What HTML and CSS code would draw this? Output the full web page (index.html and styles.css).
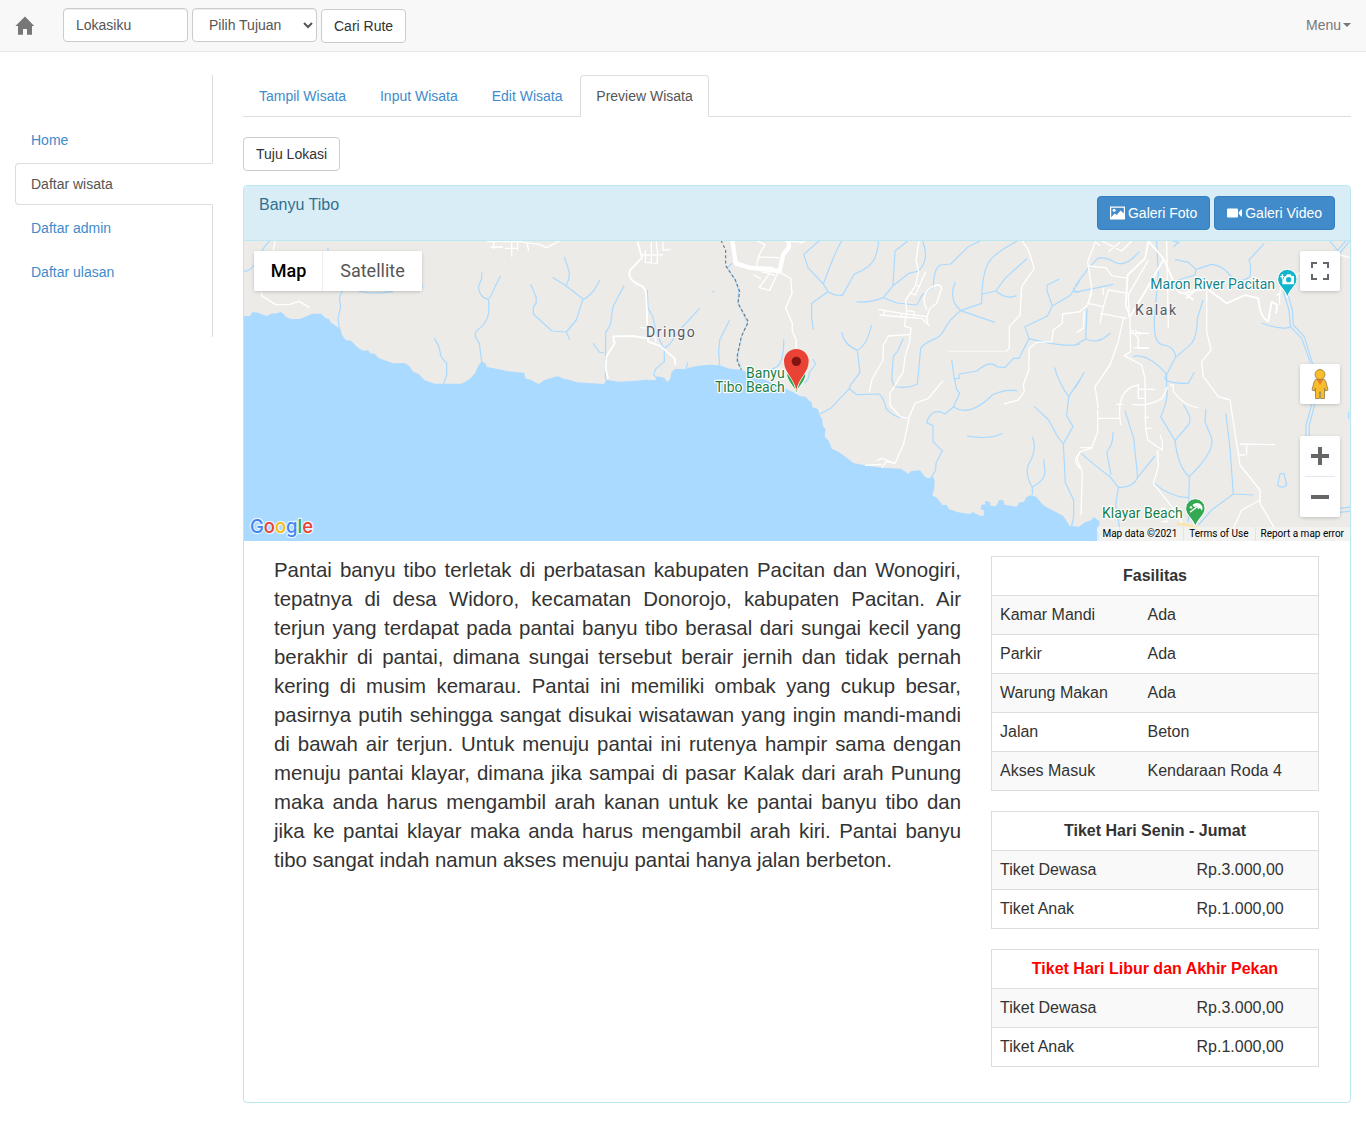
FILE: index.html
```html
<!DOCTYPE html>
<html lang="id">
<head>
<meta charset="utf-8">
<title>Preview Wisata</title>
<link rel="stylesheet" href="styles.css">
</head>
<body>
<header class="navbar">
  <a class="brand" href="#" aria-label="Home"><svg width="20" height="20" viewBox="0 0 20 20"><path fill="#777" d="M10 0.6 0.4 10H3V18.8H8V13H12V18.8H17V10H19.2Z"/></svg></a>
  <form class="route-form">
    <input class="control" type="text" value="Lokasiku">
    <select class="control"><option>Pilih Tujuan</option></select>
    <button class="btn btn-route" type="button">Cari Rute</button>
  </form>
  <a class="menu" href="#">Menu<span class="caret"></span></a>
</header>
<div class="page">
  <nav class="side-tabs">
    <a href="#">Home</a>
    <a class="active" href="#">Daftar wisata</a>
    <a href="#">Daftar admin</a>
    <a href="#">Daftar ulasan</a>
  </nav>
  <main class="content">
    <nav class="tabs">
      <a href="#">Tampil Wisata</a>
      <a href="#">Input Wisata</a>
      <a href="#">Edit Wisata</a>
      <a class="active" href="#">Preview Wisata</a>
    </nav>
    <button class="btn btn-go" type="button">Tuju Lokasi</button>
    <section class="panel">
      <div class="panel-heading">
        <h3>Banyu Tibo</h3>
        <div class="actions">
          <button class="btn btn-primary" type="button"><svg width="15" height="14" viewBox="0 0 15 14"><path fill="#fff" fill-rule="evenodd" d="M0 .5H15V13.5H0ZM1.2 1.7V11.2L4.6 7.4 6.6 9 10.6 4.6 13.8 7.6V1.7Z"/><circle cx="4.1" cy="4.3" r="1.5" fill="#fff"/></svg><span>Galeri Foto</span></button>
          <button class="btn btn-primary" type="button"><svg width="15" height="14" viewBox="0 0 15 14"><path fill="#fff" d="M1 2.5H10Q11 2.5 11 3.5V10.5Q11 11.5 10 11.5H1Q0 11.5 0 10.5V3.5Q0 2.5 1 2.5ZM11.6 6.6 14 3.4H15V10.6H14L11.6 7.6Z"/></svg><span>Galeri Video</span></button>
        </div>
      </div>
      <div class="map">
        <svg class="map-canvas" width="1106" height="300" viewBox="0 0 3318 900">
          <rect width="3318" height="900" fill="#ecebe7"/>
          <!-- sea -->
          <g fill="#aadaff">
            <path transform="translate(-3 -18)" d="M0 243 20 244 28 231 45 233 70 243 85 236 105 234 112 230 121 236 128 245 143 252 170 252 187 245 207 236 235 236 246 248 258 252 263 262 292 282 297 299 307 314 324 318 345 338 360 347 375 346 384 357 392 354 408 370 450 385 484 384 496 391 512 411 528 418 545 436 575 446H655L680 432 697 414 702 400 715 379 727 385 732 396 760 401 795 409 845 414V925H0Z"/>
            <path transform="translate(837 -18)" d="M-5 412 0 420 10 431 24 435 47 447 66 434 92 427 105 424 118 430 138 434 160 442 243 447 250 434 285 440 340 437 365 434 397 436 402 424 424 428 432 441 441 433 446 411 456 402 484 402 520 393 560 389 590 391 620 401 655 404 785 460 820 476 834 486 850 488V925H-5Z"/>
            <path transform="translate(1668 -18)" d="M-10 482 17 485 28 498 35 502 37 517 53 521 62 547 67 552 68 571 77 583 74 605 86 617 95 641 115 650 140 668 160 684 195 691 245 698 303 701 326 717 332 709 360 706 376 727 389 730 397 722 404 736 403 759 397 782 409 787 428 811 440 809 446 822 475 832 509 837 518 831 540 842 551 842 552 827 541 821 544 810 556 808 555 797 570 801 571 812 589 813 597 795 610 796 613 809 650 815 658 802 672 801 679 786 691 781 708 785 732 812 790 843 809 873 850 876V925H-10Z"/>
            <path transform="translate(2493 -18)" d="M-20 875 10 877 28 863 48 856 56 846 73 858 74 866 66 885 74 895 70 925H-20Z"/>
          </g>
          <!-- rivers -->
          <g class="river">
            <path transform="translate(-3 -18)" d="M80 18Q62 34 54 55L33 90Q20 110 0 109M255 38V50M290 290 285 250 293 215 289 190 300 160M340 165Q370 180 450 170M525 167Q540 165 537 150M716 112 716 130 706 157Q711 187 734 193 744 187 755 157L773 122M737 194V235Q734 252 722 269L697 292V305L709 325 716 380M574 310 588 335 594 365 611 385V420L602 446"/>
            <path transform="translate(837 -18)" d="M124 66 138 108Q142 130 130 150M88 127 130 153 180 192 160 255 130 291 140 314M230 135Q218 162 203 177T180 192M23 148 39 185 40 203 31 217V237L87 288 130 291M303 152 270 215 262 270 248 292 247 434M210 325 230 352 242 353M373 165 375 220 390 246 399 290 424 345V380L398 402 392 419 402 430M530 220 478 276 438 330 424 340M568 172 573 168M620 255 590 315 587 350 590 390M494 382 490 400M655 404 643 370 655 305 674 263 645 205 647 165 637 135 612 98 628 85M782 313Q783 350 775 375T742 403"/>
            <path transform="translate(1668 -18)" d="M57 18 11 58 24 98 70 147 84 170 35 205V250L40 284M125 18Q105 50 70 147M84 170Q105 183 127 181L163 117Q215 98 226 65T235 18M170 200Q205 205 250 188L279 152 327 115 355 108Q390 75 368 18M323 18 285 48 279 152M250 188 290 204 350 210 367 180 400 155Q400 105 420 90L452 87 505 35 540 18M466 142Q450 175 465 207L482 227 545 205Q545 100 575 70 600 45 652 18M548 177 587 168Q620 195 650 182M587 168 618 127 682 70M482 227 585 262M482 227Q450 250 432 285 424 302 408 310 370 325 362 340L352 447Q320 463 279 453M126 292Q130 328 172 346 202 330 214 270M172 346 180 412 150 452 148 461 92 520 60 537M148 461 170 479 237 477Q253 490 258 520 280 545 303 548M310 310 295 345 280 365 275 432 282 452M38 372 47 387 28 412 25 430 14 445M778 132 742 150 741 167 757 213M840 135 812 180 757 213 742 243 675 275 687 311 657 370H640L615 398 590 395Q573 373 530 408L478 417 477 430 463 431M820 158 825 170 840 170M687 311Q800 340 840 327M455 374 463 431 470 463 479 475 460 516 435 537Q395 515 380 563L399 572V620L427 647 408 685 407 705 395 725M460 516Q510 547 577 480 610 462 652 467M501 603Q570 615 608 595M703 515 746 555 773 605 790 627 796 743 821 795V845L815 873M790 627 819 575 800 542 806 485 840 433M763 397Q780 450 806 485M697 606Q712 640 690 680 670 710 697 757 735 735 735 710L731 673M697 757V780"/>
            <path transform="translate(2493 -18)" d="M0 153 40 100 68 70Q90 65 120 82T193 50M0 172 115 148M36 222 32 312 0 330M32 312Q70 330 106 294M28 411 0 460M245 18 250 120 240 230Q230 325 265 330T302 367L350 325Q367 300 367 250L384 195M174 364Q220 355 275 418 250 445 340 445L358 412M302 367 275 418V450L277 480Q270 520 257 545L300 617 340 570Q355 550 325 510M300 617Q310 700 343 725 420 650 410 610L390 560 393 522M343 725 340 860M235 743Q290 790 343 788M452 535Q460 590 465 640L475 777 410 825 370 870M475 777 535 780M114 592Q115 630 95 650L108 720M18 655Q70 700 105 725L130 757 122 810 135 885M130 757Q175 760 188 727L240 663M188 727 176 610 150 527M294 18 312 22 295 35M300 73 340 82 363 103 360 120 310 135M363 103 410 88Q440 90 465 120T525 125Q530 90 522 75L568 25M561 264Q610 285 645 277M765 18 795 55M780 55 812 18M790 60 824 18M821 530V552M795 820 826 816M795 832 826 828M615 716H627L635 750Q620 763 608 750Z"/>
            <path transform="translate(2493 -18)" d="M625 170 642 225 646 275 680 310 707 385M635 165 652 225 655 270 688 305 717 400M711 505 693 570V610M720 505 703 570V610"/>
          </g>
          <!-- minor roads -->
          <g class="road">
            <path transform="translate(-3 -18)" d="M96 18 90 50M55 170 56 182 98 209 140 208 168 199 200 218M732 20H840M752 20V42M742 36H780M806 20V65M824 18V46M785 40H824"/>
            <path transform="translate(837 -18)" d="M0 22 50 28 70 38 110 18M12 22 17 48M367 45V82L403 85V60H356M385 20V85M420 20V46L442 43M400 20 404 58 420 60M350 277 376 280 398 310V322M376 280V322M703 18 726 28 708 60 700 95 752 98M708 66 768 68M752 100 708 158 740 166 765 112M716 110 756 120M692 120 714 131M785 18 840 22M767 110 803 130 807 175 788 220 808 265V290L820 315V345"/>
            <path transform="translate(1668 -18)" d="M0 25 18 18M357 18 348 75 356 110 345 155 317 195 320 230 313 273 333 280 329 320 315 365 310 410 270 475 270 510 300 545 326 550 345 505 385 490 428 438M345 150 357 155 345 180 327 172M357 155 377 110M235 223 305 235 380 245 383 265M238 240 310 246 365 250 388 272M320 227 343 230 340 245M253 225V242M305 235 302 248M380 225Q360 180 390 160T425 160L410 205 390 220 378 255M333 298 265 303 250 330 249 375 215 435 208 472M327 550 310 630 285 685 245 670 230 677M285 685 260 680 245 697M195 691 245 688M667 18 685 45 703 100 665 155 660 240 628 275V340L620 348M840 230 788 237 787 265 760 285 755 320 710 322 688 340 686 405 670 450 673 470 655 495 612 507M840 655Q815 675 840 700"/>
            <path transform="translate(2493 -18)" d="M62 18 38 80 50 160 40 208 12 232M38 93 92 98 110 122 160 130M80 18 140 48 170 18M100 50 135 22M62 20 75 32M50 175 38 205 85 215 100 165 160 175M85 160V180M85 215 75 265M75 235 155 250M28 228 25 280 5 292M145 250 130 320 105 390 60 455 70 520M220 75 160 180 163 250M165 250 167 350 148 362 200 390 210 430 212 580 218 615 262 645V620L255 600M163 295H222M170 285 190 310V340H222M175 338H220M190 293 220 296M180 285 195 300M275 18 280 280M395 140V290L408 345 380 380 385 425 430 485 465 495 495 690 555 765V805L620 917M495 627 600 629M515 627V660M493 660H510M555 795 500 825 470 890M285 450H295V470Q330 515 370 518M278 455 262 490Q220 515 172 508M190 447V490H212M190 463H240M190 450Q120 460 137 570M123 508H145M68 525V550H135M68 550V590L50 640 15 650 5 670 22 710 18 840M16 638H50M208 547H222M210 580H230M248 645 250 695 235 745 310 840 320 865M258 820H270L275 860M260 860H280M620 150Q610 185 615 210M795 60 826 68M665 120 680 110"/>
            <path transform="translate(1668 -18)" stroke="#f7f5f5" d="M443 349H620"/>
          </g>
          <g class="road-wide">
            <path transform="translate(837 -18)" d="M343 18 357 68 322 105Q310 130 345 148 372 155 370 190L375 320 410 332 455 370 457 390M375 310 330 303 270 304 275 325 250 365 248 400 255 430"/>
            <path transform="translate(2493 -18)" d="M220 18 265 70 285 115 310 170 320 175 395 160 455 205 510 180 550 190Q555 250 580 258L590 200 607 210 603 235M265 75 210 170 165 245 152 210 158 120 210 70 220 20M605 180 615 175M330 175 355 195M333 190 355 170"/>
          </g>
          <path class="highway" transform="translate(837 -18)" d="M628 16 638 85 680 98 770 108 780 60 797 38 798 14"/>
          <path class="border-line" transform="translate(837 -18)" d="M594 16 608 45V92L637 135 650 170 645 205 676 260 655 305 643 360 643 380 655 404"/>
          <path transform="translate(2493 -18)" d="M305 867Q340 867 370 880L395 918" fill="none" stroke="#fbe6a9" stroke-width="8"/>
          <!-- place pins -->
          <g transform="translate(2493 -18)">
            <path d="M637 187C629 160 608 152 608 132A29 29 0 0 1 666 132C666 152 645 160 637 187Z" fill="#12b5cb" stroke="#fff" stroke-width="3"/>
            <path fill="#fff" fill-rule="evenodd" d="M627 123H633L636 118H647L650 123H657V148H622V131H627ZM641 126A8 8 0 1 0 641 142 8 8 0 1 0 641 126ZM620 118H624V123H629V127H624V132H620V127H616V123H620Z"/>
            <path d="M361 874C352 849 332 840 332 820A29 29 0 0 1 390 820C390 840 370 849 361 874Z" fill="#34a853" stroke="#fff" stroke-width="3"/>
            <path fill="#fff" d="M352 810Q362 800 375 806 386 814 381 827L375 819 369 823 366 814 358 816Z"/>
            <path fill="none" stroke="#fff" stroke-width="4" d="M345 832 368 814"/>
            <circle cx="348" cy="817" r="3.500" fill="#fff"/>
          </g>
          <g transform="translate(837 -18)">
            <path d="M820 475C812 450 791 440 791 415H849C849 440 828 450 820 475Z" fill="#34a853" stroke="#fff" stroke-width="3"/>
            <path d="M790 404C800 425 816 435 820 466 824 435 840 425 850 404" fill="none" stroke="#fff" stroke-width="6"/>
            <path d="M820 466C814 429 783 414 783 379A37 37 0 0 1 857 379C857 414 826 429 820 466Z" fill="#ea4335"/>
            <circle cx="820" cy="379" r="14" fill="#811411"/>
          </g>
          <g class="place">
            <text class="town" x="1206" y="289" textLength="146">Dringo</text>
            <text class="town" x="2673" y="222" textLength="123">Kalak</text>
            <text class="park" x="1506" y="412" textLength="116">Banyu</text>
            <text class="park" x="1413" y="454" textLength="209">Tibo Beach</text>
            <text class="park" x="2574" y="832" textLength="242">Klayar Beach</text>
            <text class="sight" x="2719" y="145" textLength="374">Maron River Pacitan</text>
          </g>
          <text class="logo" x="18" y="877" textLength="189" lengthAdjust="spacingAndGlyphs"><tspan fill="#4285f4">G</tspan><tspan fill="#ea4335">o</tspan><tspan fill="#fbbc04">o</tspan><tspan fill="#4285f4">g</tspan><tspan fill="#34a853">l</tspan><tspan fill="#ea4335">e</tspan></text>
        </svg>
        <div class="map-types"><button class="on" type="button">Map</button><button type="button">Satellite</button></div>
        <button class="map-btn fullscreen" type="button" aria-label="Fullscreen"><svg width="18" height="18"><path fill="none" stroke="#666" stroke-width="2" d="M1 6V1H6M12 1H17V6M17 12V17H12M6 17H1V12"/></svg></button>
        <button class="map-btn pegman" type="button" aria-label="Street View"><svg width="18" height="32" viewBox="0 0 18 32"><path d="M5 11H13L15 14 17 22 14.500 23 13.500 20V30.500H9.600V24H8.400V30.500H4.500V20L3.500 23 1 22 3 14Z" fill="#fbbc2c" stroke="#8c7a45" stroke-width=".8"/><path d="M5.500 11H12.500L9 17Z" fill="#e58130"/><circle cx="9" cy="6.500" r="5" fill="#fbbc2c" stroke="#8c7a45" stroke-width=".8"/></svg></button>
        <div class="zoom"><button type="button" aria-label="Zoom in"><svg width="18" height="18"><path d="M9 0V18M0 9H18" stroke="#666" stroke-width="4"/></svg></button><button type="button" aria-label="Zoom out"><svg width="18" height="18"><path d="M0 9H18" stroke="#666" stroke-width="4"/></svg></button></div>
        <div class="legal"><span>Map data ©2021</span><span>Terms of Use</span><span>Report a map error</span></div>
      </div>
      <div class="panel-body">
        <p class="description">Pantai banyu tibo terletak di perbatasan kabupaten Pacitan dan Wonogiri, tepatnya di desa Widoro, kecamatan Donorojo, kabupaten Pacitan. Air terjun yang terdapat pada pantai banyu tibo berasal dari sungai kecil yang berakhir di pantai, dimana sungai tersebut berair jernih dan tidak pernah kering di musim kemarau. Pantai ini memiliki ombak yang cukup besar, pasirnya putih sehingga sangat disukai wisatawan yang ingin mandi-mandi di bawah air terjun. Untuk menuju pantai ini rutenya hampir sama dengan menuju pantai klayar, dimana jika sampai di pasar Kalak dari arah Punung maka anda harus mengambil arah kanan untuk ke pantai banyu tibo dan jika ke pantai klayar maka anda harus mengambil arah kiri. Pantai banyu tibo sangat indah namun akses menuju pantai hanya jalan berbeton.</p>
        <div class="facts">
          <table class="facilities">
            <colgroup><col class="label"><col></colgroup>
            <tr><th colspan="2">Fasilitas</th></tr>
            <tr><td>Kamar Mandi</td><td>Ada</td></tr>
            <tr><td>Parkir</td><td>Ada</td></tr>
            <tr><td>Warung Makan</td><td>Ada</td></tr>
            <tr><td>Jalan</td><td>Beton</td></tr>
            <tr><td>Akses Masuk</td><td>Kendaraan Roda 4</td></tr>
          </table>
          <table>
            <colgroup><col class="label"><col></colgroup>
            <tr><th colspan="2">Tiket Hari Senin - Jumat</th></tr>
            <tr><td>Tiket Dewasa</td><td>Rp.3.000,00</td></tr>
            <tr><td>Tiket Anak</td><td>Rp.1.000,00</td></tr>
          </table>
          <table class="holiday">
            <colgroup><col class="label"><col></colgroup>
            <tr><th colspan="2">Tiket Hari Libur dan Akhir Pekan</th></tr>
            <tr><td>Tiket Dewasa</td><td>Rp.3.000,00</td></tr>
            <tr><td>Tiket Anak</td><td>Rp.1.000,00</td></tr>
          </table>
        </div>
      </div>
    </section>
  </main>
</div>
</body>
</html>
```
FILE: styles.css
```css
* { box-sizing: border-box; }
body {
  margin: 0;
  font: 14px/20px "Liberation Sans", Arial, sans-serif;
  color: #333;
  background: #fff;
}
a { color: #428bca; text-decoration: none; }
button, input, select { font: inherit; }

.navbar {
  display: flex;
  height: 52px;
  padding: 0 15px;
  background: #f8f8f8;
  border-bottom: 1px solid #e7e7e7;
}
.brand { width: 48px; padding-top: 16px; }
.brand svg { display: block; }
.route-form { display: flex; gap: 4px; padding-top: 8px; }
.control {
  width: 125px;
  height: 34px;
  padding: 6px 12px;
  color: #555;
  background: #fff;
  border: 1px solid #ccc;
  border-radius: 4px;
  box-shadow: inset 0 1px 1px rgba(0, 0, 0, .075);
}
.btn {
  height: 34px;
  padding: 6px 12px;
  color: #333;
  background: #fff;
  border: 1px solid #ccc;
  border-radius: 4px;
  white-space: nowrap;
}
.btn-route { margin-top: 1px; }
.menu {
  display: flex;
  align-items: center;
  height: 20px;
  margin: 15px 0 0 auto;
  color: #777;
}
.caret {
  margin-left: 2px;
  border-top: 4px solid #777;
  border-left: 4px solid transparent;
  border-right: 4px solid transparent;
}

.page { display: flex; gap: 30px; padding: 23px 15px 0; }
.side-tabs {
  flex: none;
  display: flex;
  flex-direction: column;
  gap: 2px;
  width: 198px;
  height: 262px;
  padding-top: 44px;
  border-right: 1px solid #ddd;
}
.side-tabs a, .tabs a { padding: 10px 15px; border: 1px solid transparent; }
.side-tabs .active {
  margin-right: -1px;
  color: #555;
  background: #fff;
  border-color: #ddd #fff #ddd #ddd;
  border-radius: 4px 0 0 4px;
}
.content { flex: 1; min-width: 0; }
.tabs {
  display: flex;
  gap: 1.85px;
  height: 42px;
  margin-bottom: 20px;
  border-bottom: 1px solid #ddd;
}
.tabs a { height: 42px; }
.tabs .active {
  color: #555;
  background: #fff;
  border-color: #ddd #ddd #fff;
  border-radius: 4px 4px 0 0;
}
.btn-go { display: block; margin-bottom: 14px; }

.panel {
  height: 918px;
  border: 1px solid #bce8f1;
  border-radius: 4px;
  box-shadow: 0 1px 1px rgba(0, 0, 0, .05);
}
.panel-heading {
  display: flex;
  justify-content: space-between;
  height: 55px;
  padding: 10px 15px;
  background: #d9edf7;
  border-bottom: 1px solid #bce8f1;
  border-radius: 3px 3px 0 0;
}
.panel-heading h3 { margin: 0; font-size: 16px; font-weight: 400; line-height: 17px; color: #31708f; }
.actions { display: flex; gap: 4px; }
.btn-primary {
  display: flex;
  align-items: center;
  gap: 3px;
  color: #fff;
  background: #428bca;
  border-color: #357ebd;
}

.map { position: relative; height: 300px; overflow: hidden; font-family: Roboto, sans-serif; }
.map-canvas { display: block; }
.river, .road, .road-wide { fill: none; stroke-linejoin: round; }
.river { stroke: #aadaff; stroke-width: 3.6; }
.road { stroke: #fff; stroke-width: 4; }
.road-wide { stroke: #fff; stroke-width: 5.5; }
.highway { fill: none; stroke: #fff; stroke-width: 13; stroke-linejoin: round; }
.border-line { fill: none; stroke: #777; stroke-width: 3.5; stroke-dasharray: 9 7; }
.place text { font-size: 42px; stroke: #fff; stroke-width: 7; stroke-linejoin: round; paint-order: stroke; }
.place .town { fill: #545b69; stroke: #f5f4f2; }
.place .park { fill: #188048; }
.place .sight { fill: #12858f; }
.logo {
  font: 500 58px Inter, sans-serif;
  stroke: #e8f4ff;
  stroke-width: 7;
  stroke-linejoin: round;
  paint-order: stroke;
}
.map button { padding: 0; border: 0; background: #fff; }
.map-types, .map-btn, .zoom {
  position: absolute;
  background: #fff;
  border-radius: 2px;
  box-shadow: 0 1px 4px -1px rgba(0, 0, 0, .3);
}
.map-types { display: flex; top: 10px; left: 10px; height: 40px; overflow: hidden; font-size: 18px; }
.map-types button { width: 99px; color: #565656; }
.map-types .on { width: 69px; padding-left: 1px; color: #000; font-weight: 500; border-right: 1px solid #eee; }
.map-btn { right: 10px; display: grid; place-items: center; width: 40px; height: 40px; }
.fullscreen { top: 10px; }
.pegman { top: 123px; }
.zoom { right: 10px; top: 195px; width: 40px; height: 81px; padding: 0 5px; }
.zoom button { display: grid; place-items: center; width: 30px; height: 40px; }
.zoom button + button { height: 41px; border-top: 1px solid #e6e6e6; }
.legal {
  position: absolute;
  right: 0;
  bottom: 0;
  display: flex;
  height: 14px;
  font-size: 10px;
  line-height: 14px;
  color: #000;
  white-space: nowrap;
  background: rgba(245, 245, 245, .7);
}
.legal span { padding: 0 6px 0 5px; }
.legal span + span { border-left: 1px solid rgba(0, 0, 0, .06); }

.panel-body { display: flex; gap: 30px; padding: 15px 31px 0 30px; }
.description { flex: 1; margin: 0; font-size: 20.4px; line-height: 29px; text-align: justify; }
.facts { display: flex; flex-direction: column; gap: 20px; width: 328px; }
table { width: 328px; border-collapse: collapse; table-layout: fixed; font-size: 16px; }
tr { height: 39px; }
th, td { padding: 0 8px; border: 1px solid #ddd; text-align: left; }
th { text-align: center; }
td:first-child { border-right: 0; }
td + td { border-left: 0; }
tr:nth-child(even) { background: #f9f9f9; }
.label { width: 197px; }
.facilities .label { width: 148px; }
.holiday th { color: #f00; }
```
